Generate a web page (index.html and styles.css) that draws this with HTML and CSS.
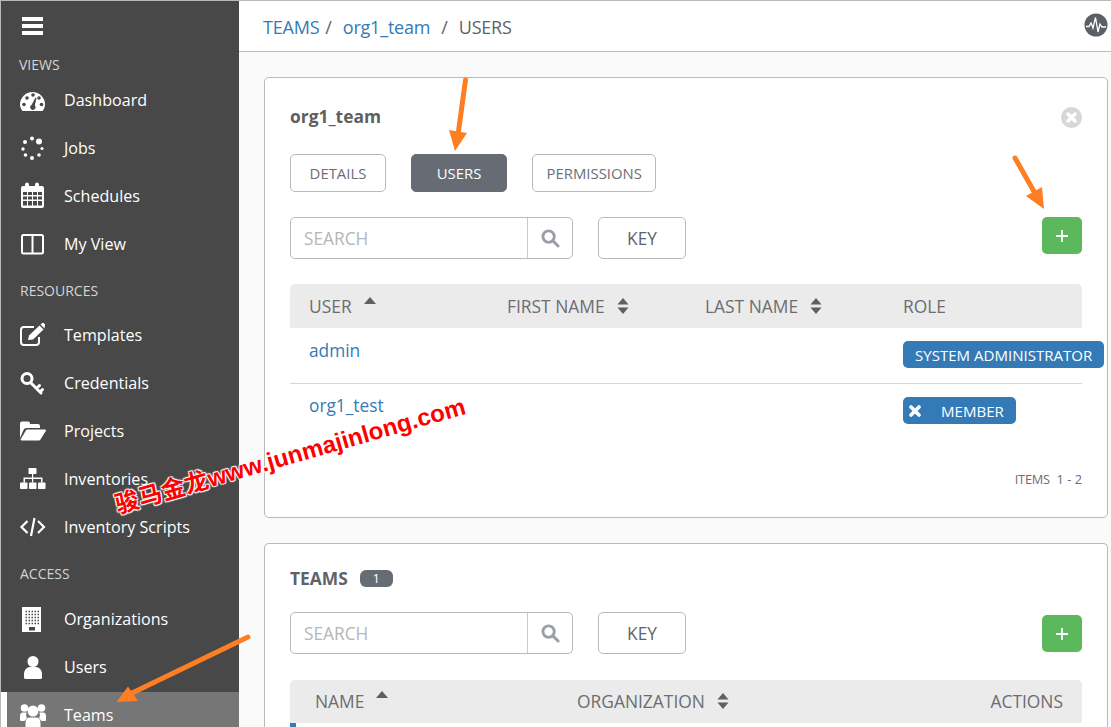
FILE: index.html
```html
<!DOCTYPE html>
<html lang="en">
<head>
<meta charset="utf-8">
<title>Teams</title>
<link rel="stylesheet" href="styles.css">
</head>
<body>
<div class="app">
  <aside class="sidebar">
    <div class="burger"><span></span><span></span><span></span></div>
    <div class="group-label first">VIEWS</div>
    <a class="nav"><svg class="ico" viewBox="0 0 26 26"><path class="w" d="M2.500 24C0.800 22 0 19.800 0 17.500A12.500 12.500 0 0 1 25 17.500C25 19.800 24.200 22 22.500 24Z"/><g class="d"><circle cx="4" cy="17.500" r="1.800"/><circle cx="7" cy="11" r="1.800"/><circle cx="13" cy="8" r="1.800"/><circle cx="19" cy="11" r="1.800"/><circle cx="21.500" cy="17.500" r="1.800"/><path d="M15.500 10.500L16.500 11L14.800 18.500A2.600 2.600 0 1 1 11.500 18Z"/></g></svg><span>Dashboard</span></a>
    <a class="nav"><svg class="ico" viewBox="0 0 26 26"><g class="w"><circle cx="12" cy="3.500" r="2"/><circle cx="19" cy="6.500" r="3"/><circle cx="22" cy="13.500" r="1.600"/><circle cx="19" cy="20" r="1.800"/><circle cx="12" cy="23" r="2"/><circle cx="5.500" cy="20" r="1.800"/><circle cx="3" cy="14" r="1.700"/><circle cx="5" cy="7" r="2"/></g></svg><span>Jobs</span></a>
    <a class="nav"><svg class="ico" viewBox="0 0 26 26"><path class="w" d="M3 3H5V1.500a2 2 0 0 1 4 0V3H15V1.500a2 2 0 0 1 4 0V3H22a2 2 0 0 1 2 2V23a2 2 0 0 1-2 2H3a2 2 0 0 1-2-2V5a2 2 0 0 1 2-2Z"/><g class="d"><rect x="3" y="9" width="4" height="3"/><rect x="8" y="9" width="4" height="3"/><rect x="13" y="9" width="4" height="3"/><rect x="18" y="9" width="4" height="3"/><rect x="3" y="13.500" width="4" height="3"/><rect x="8" y="13.500" width="4" height="3"/><rect x="13" y="13.500" width="4" height="3"/><rect x="18" y="13.500" width="4" height="3"/><rect x="3" y="18" width="4" height="4.500"/><rect x="8" y="18" width="4" height="4.500"/><rect x="13" y="18" width="4" height="4.500"/><rect x="18" y="18" width="4" height="4.500"/></g></svg><span>Schedules</span></a>
    <a class="nav"><svg class="ico" viewBox="0 0 26 26"><rect class="s" x="2" y="4" width="21" height="18.500" rx="1.500"/><path class="s" d="M12.500 4V22.500"/></svg><span>My View</span></a>
    <div class="group-label res">RESOURCES</div>
    <a class="nav"><svg class="ico" viewBox="0 0 26 26"><path class="s" d="M14 5H4A3 3 0 0 0 1 8V20A3 3 0 0 0 4 23H16A3 3 0 0 0 19 20V15"/><path class="w" d="M8 18L9 13.500L19.500 3.500L23.500 7.500L13 17.500Z"/><path class="w" d="M20.500 2.500L22 1.200Q23 .5 24 1.300L24.800 2.200Q25.500 3.200 24.700 4.200L24.500 6.500Z"/></svg><span>Templates</span></a>
    <a class="nav"><svg class="ico" viewBox="0 0 26 26"><circle class="s3" cx="7" cy="8.500" r="5"/><path class="s3 round" d="M11 13L21 23M16.500 18.500L19.500 15.500M20 22L22.500 19.500"/></svg><span>Credentials</span></a>
    <a class="nav"><svg class="ico" viewBox="0 0 26 26"><path class="w" d="M0 20V5.500A2 2 0 0 1 2 3.500H8A2 2 0 0 1 10 5.500V6H18A2 2 0 0 1 20 8V10H6.500A3.500 3.500 0 0 0 3.500 12Z"/><path class="w" d="M6.500 11.500H25A1 1 0 0 1 25.800 13L20.500 21.500A2 2 0 0 1 19 22.500H1.500A1 1 0 0 1 .8 21Z"/></svg><span>Projects</span></a>
    <a class="nav"><svg class="ico" viewBox="0 0 26 26"><g class="w"><rect x="8.500" y="2" width="8" height="6" rx=".8"/><rect x="0" y="16.500" width="7.500" height="6.500" rx=".8"/><rect x="9" y="16.500" width="7.500" height="6.500" rx=".8"/><rect x="18" y="16.500" width="7.500" height="6.500" rx=".8"/><path d="M12 8H13.200V11.500H22.500V16.500H21V13H13.200V16.500H12V13H5V16.500H3.500V11.500H12Z"/></g></svg><span>Inventories</span></a>
    <a class="nav"><svg class="ico" viewBox="0 0 26 26"><path class="s2" d="M7.500 7L1.500 13L7.500 19M18 7L24 13L18 19M14.500 4L11 22"/></svg><span>Inventory Scripts</span></a>
    <div class="group-label">ACCESS</div>
    <a class="nav"><svg class="ico" viewBox="0 0 26 26"><rect class="w" x="2" y="1" width="19" height="25"/><path class="dots" d="M5.500 5.500H19M5.500 8.500H19M5.500 11.500H19M5.500 14.500H19M5.500 17.500H19"/><rect class="d" x="9" y="21" width="6" height="3.500"/></svg><span>Organizations</span></a>
    <a class="nav"><svg class="ico" viewBox="0 0 26 26"><circle class="w" cx="13" cy="7.500" r="5.500"/><path class="w" d="M4 24V20C4 16 7 13 10 13H16C19 13 22 16 22 20V24Q22 25 20 25H6Q4 25 4 24Z"/></svg><span>Users</span></a>
    <a class="nav active"><svg class="ico" viewBox="0 0 26 26"><g class="w"><circle cx="4.500" cy="6" r="3.800"/><circle cx="21.500" cy="6" r="3.800"/><circle cx="13" cy="9" r="5.500"/><path d="M0 18V14Q0 10.500 3 10.500H6.500Q5.500 14 7 16L4.500 19H1Q0 19 0 18Z"/><path d="M26 18V14Q26 10.500 23 10.500H19.500Q20.500 14 19 16L21.500 19H25Q26 19 26 18Z"/><path d="M5.500 26V21Q5.500 15.500 10 15.500H16Q20.500 15.500 20.500 21V26Z"/></g></svg><span>Teams</span></a>
  </aside>

  <main class="main">
    <header class="topbar">
      <nav class="crumbs"><a>TEAMS</a><i class="sep1">/</i><a>org1_team</a><i class="sep2">/</i><b>USERS</b></nav>
      <svg class="pulse" viewBox="0 0 24 24"><circle cx="12" cy="12" r="11.500"/><path d="M2 13.500H5L7 10L9 15L11.500 4.500L14 19L16 11L18 14H22"/></svg>
    </header>
    <div class="content">
      <section class="card card-users">
        <div class="title-row">
          <h2 class="title">org1_team</h2>
          <svg class="close" viewBox="0 0 21 21"><circle cx="10.500" cy="10.500" r="10.500"/><path d="M7 7L14 14M14 7L7 14"/></svg>
        </div>
        <div class="tabs"><a class="tab">DETAILS</a><a class="tab on">USERS</a><a class="tab">PERMISSIONS</a></div>
        <div class="toolbar">
          <div class="search"><span class="ph">SEARCH</span><span class="lens"><svg viewBox="0 0 20 20"><circle cx="8" cy="8" r="6"/><path d="M12.500 12.500L18 18"/></svg></span></div>
          <a class="key">KEY</a>
          <a class="add"><svg viewBox="0 0 14 14"><path d="M7 1V13M1 7H13"/></svg></a>
        </div>
        <div class="thead users-grid">
          <div class="th">USER<svg class="sort up" viewBox="0 0 12 7"><path d="M6 0L12 7H0Z"/></svg></div>
          <div class="th">FIRST NAME<svg class="sort" viewBox="0 0 12 16"><path d="M6 0L11.500 6.500H.5ZM6 16L.5 9.500H11.500Z"/></svg></div>
          <div class="th">LAST NAME<svg class="sort" viewBox="0 0 12 16"><path d="M6 0L11.500 6.500H.5ZM6 16L.5 9.500H11.500Z"/></svg></div>
          <div class="th">ROLE</div>
        </div>
        <div class="row users-grid line">
          <a class="link">admin</a><span></span><span></span>
          <span class="role">SYSTEM ADMINISTRATOR</span>
        </div>
        <div class="row users-grid">
          <a class="link tight">org1_test</a><span></span><span></span>
          <span class="role removable"><svg viewBox="0 0 12 12"><path d="M2 2L10 10M10 2L2 10"/></svg>MEMBER</span>
        </div>
        <div class="items"><span>ITEMS</span>&nbsp; 1 - 2</div>
      </section>

      <section class="card card-teams">
        <div class="teams-head"><h3 class="teams-title">TEAMS</h3><span class="count">1</span></div>
        <div class="toolbar">
          <div class="search"><span class="ph">SEARCH</span><span class="lens"><svg viewBox="0 0 20 20"><circle cx="8" cy="8" r="6"/><path d="M12.500 12.500L18 18"/></svg></span></div>
          <a class="key">KEY</a>
          <a class="add low"><svg viewBox="0 0 14 14"><path d="M7 1V13M1 7H13"/></svg></a>
        </div>
        <div class="thead teams-grid">
          <div class="th">NAME<svg class="sort up" viewBox="0 0 12 7"><path d="M6 0L12 7H0Z"/></svg></div>
          <div class="th">ORGANIZATION<svg class="sort" viewBox="0 0 12 16"><path d="M6 0L11.500 6.500H.5ZM6 16L.5 9.500H11.500Z"/></svg></div>
          <div class="th">ACTIONS</div>
        </div>
        <div class="selected-row"></div>
      </section>
    </div>
  </main>

  <svg class="arrows" viewBox="0 0 1111 727">
    <path class="shaft" d="M465.500 80L458 135"/>
    <path class="head" d="M455 151L449 130L467 133Z"/>
    <path class="shaft" d="M1015 158L1036 195"/>
    <path class="head" d="M1044 209L1026 196L1042 187Z"/>
    <path class="shaft" d="M248 637L130 694"/>
    <path class="head" d="M116.500 702L128 686.500L138 701Z"/>
  </svg>
  <div class="watermark">骏马金龙www.junmajinlong.com</div>
</div>
</body>
</html>
```
FILE: styles.css
```css
* { box-sizing: border-box; }
html, body { margin: 0; padding: 0; height: 100%; overflow: hidden; }
body { font-family: "Open Sans", "Noto Sans", sans-serif; color: #6b6d73; background: #fff; }
a { color: inherit; text-decoration: none; }
h2, h3 { margin: 0; }
i { font-style: normal; }

.app { position: relative; display: flex; width: 1111px; height: 727px; border-top: 1px solid #b9b9b9; overflow: hidden; }

/* sidebar */
.sidebar { width: 239px; flex: none; height: 726px; background: #484848; color: #fff; border-left: 1px solid #b9b9b9; background-clip: padding-box; }
.burger { display: flex; flex-direction: column; gap: 3px; width: 21px; margin: 16px 0 0 21px; height: 19px; }
.burger span { display: block; height: 4px; background: #fff; }
.group-label { display: flex; align-items: center; height: 44px; padding-left: 19px; font-size: 14px; color: #d4d4d4; }
.group-label.res { height: 43px; padding-top: 2px; }
.group-label.first { height: 23px; margin-top: 17px; padding-left: 18px; }
.nav { display: flex; align-items: center; gap: 18px; height: 48px; padding-left: 13px; border-left: 6px solid transparent; font-size: 16.1px; background-clip: padding-box; }
.nav.active { height: 47px; margin-top: 1px; padding-bottom: 2px; background-color: #767676; border-left-color: #fff; }
.ico { width: 26px; height: 26px; flex: none; overflow: visible; }
.w { fill: #fff; }
.d { fill: #484848; }
.dots { fill: none; stroke: #484848; stroke-width: 1.500; stroke-dasharray: 1.500 1.500; }
.s, .s2, .s3 { fill: none; stroke: #fff; }
.s { stroke-width: 2; }
.s2 { stroke-width: 2.200; }
.s3 { stroke-width: 3; }
.round { stroke-linecap: round; }

/* main */
.main { flex: 1; min-width: 0; display: flex; flex-direction: column; background: #fafafa; }
.topbar { flex: none; height: 51px; display: flex; align-items: center; justify-content: space-between; padding: 0 3px 2px 24px; background: #fff; border-bottom: 1px solid #bdbdbd; }
.crumbs { padding-top: 4px; font-size: 18px; color: #606368; letter-spacing: -.2px; }
.crumbs a { color: #337ab7; }
.crumbs b { font-weight: 400; }
.sep1 { margin: 0 11px 0 6px; }
.sep2 { margin: 0 11px 0 11px; }
.pulse { width: 24px; height: 24px; flex: none; }
.pulse circle { fill: #5b5f68; }
.pulse path { fill: none; stroke: #fff; stroke-width: 1.300; }

.content { flex: 1; padding: 25px 3px 0 25px; display: flex; flex-direction: column; gap: 25px; }
.card { flex: none; background: #fff; border: 1px solid #b9b9b9; border-radius: 5px; padding: 0 25px; }
.card-users { height: 441px; padding-top: 26px; }
.card-teams { height: 200px; padding-top: 24px; border-bottom: 0; border-radius: 5px 5px 0 0; }

.title-row { display: flex; align-items: center; justify-content: space-between; height: 26px; }
.title { margin-top: -2px; font-size: 17.4px; font-weight: 700; line-height: 26px; color: #5f5f5f; }
.close { width: 21px; height: 21px; margin-right: 0; }
.close circle { fill: #d7d7d7; }
.close path { stroke: #fff; stroke-width: 3.500; stroke-linecap: round; }

.tabs { display: flex; gap: 25px; margin-top: 24px; }
.tab { display: flex; align-items: center; justify-content: center; min-width: 96px; height: 38px; padding: 0 13.500px; border: 1px solid #b9b9b9; border-radius: 5px; font-size: 14.9px; color: #6b6f76; background: #fff; }
.tab.on { background: #676b73; border-color: #676b73; color: #fff; }

.toolbar { display: flex; align-items: flex-start; gap: 25px; margin-top: 25px; }
.card-teams .toolbar { margin-top: 24px; }
.search { display: flex; align-items: stretch; width: 283px; height: 42px; border: 1px solid #b9b9b9; border-radius: 5px; background: #fff; }
.ph { flex: 1; display: flex; align-items: center; padding-left: 13px; font-size: 17.3px; color: #b4b6b9; }
.lens { display: flex; align-items: center; justify-content: center; width: 45px; border-left: 1px solid #c9c9c9; }
.lens svg { width: 19px; height: 19px; fill: none; stroke: #9b9fa5; stroke-width: 3; stroke-linecap: round; }
.key { display: flex; align-items: center; justify-content: center; width: 88px; height: 42px; border: 1px solid #b9b9b9; border-radius: 5px; font-size: 17.3px; color: #5f6368; }
.add { display: flex; align-items: center; justify-content: center; width: 40px; height: 37px; margin-left: auto; background: #5cb85c; border-radius: 5px; }
.add.low { margin-top: 3px; }
.add svg { width: 14px; height: 14px; fill: none; stroke: #fff; stroke-width: 1.800; }

.thead { height: 44px; margin-top: 25px; align-items: center; background: #ebebeb; border-radius: 5px 5px 0 0; }
.card-teams .thead { height: 43px; margin-top: 26px; padding-bottom: 2px; }
.th { display: flex; align-items: center; font-size: 17.4px; color: #6b6d73; white-space: nowrap; }
.users-grid { display: grid; grid-template-columns: repeat(4, 198px); padding-left: 19px; }
.teams-grid { display: grid; grid-template-columns: 262px 1fr auto; padding: 0 19px 0 25px; }
.sort { width: 12px; height: 16px; margin-left: 12px; fill: #5f5f5f; }
.sort.up { height: 7px; margin: -12px 0 0 12px; }

.row { height: 56px; font-size: 17.3px; align-items: start; }
.row.line { height: 56px; border-bottom: 1px solid #d7d7d7; }
.link { color: #337ab7; margin-top: 11px; line-height: 24px; }
.link.tight { margin-top: 10px; }
.role { display: inline-flex; align-items: center; justify-self: start; height: 27px; margin-top: 13px; padding: 0 12px; border-radius: 5px; background: #337ab7; color: #fff; font-size: 15.05px; white-space: nowrap; }
.role.removable { gap: 20px; padding: 0 12px 0 6px; }
.role svg { width: 12px; height: 12px; fill: none; stroke: #fff; stroke-width: 3.600; stroke-linecap: round; }

.items { margin-top: 30px; text-align: right; font-size: 12.8px; color: #6b6d73; }
.items span { letter-spacing: -.2px; }

.teams-head { display: flex; align-items: center; gap: 12px; height: 20px; }
.teams-title { font-size: 17.4px; font-weight: 700; color: #5f6368; }
.count { display: flex; align-items: center; justify-content: center; width: 33px; height: 17px; border-radius: 6px; background: #676b73; color: #fff; font-size: 13px; }
.selected-row { width: 6px; height: 6px; background: #337ab7; }

/* annotations */
.arrows { position: absolute; left: 0; top: -1px; width: 1111px; height: 727px; pointer-events: none; }
.shaft { fill: none; stroke: #fd7e23; stroke-width: 5; stroke-linecap: round; }
.head { fill: #fd7e23; }
.watermark { position: absolute; left: 115px; top: 485px; transform: rotate(-16deg); transform-origin: 0 50%; white-space: nowrap; font-family: "Liberation Sans", "Noto Sans CJK SC", sans-serif; font-weight: 700; font-size: 24px; color: #f00; text-shadow: 1px 1px 1px #fff, -1px -1px 1px #fff, 1px -1px 1px #fff, -1px 1px 1px #fff; }
```
